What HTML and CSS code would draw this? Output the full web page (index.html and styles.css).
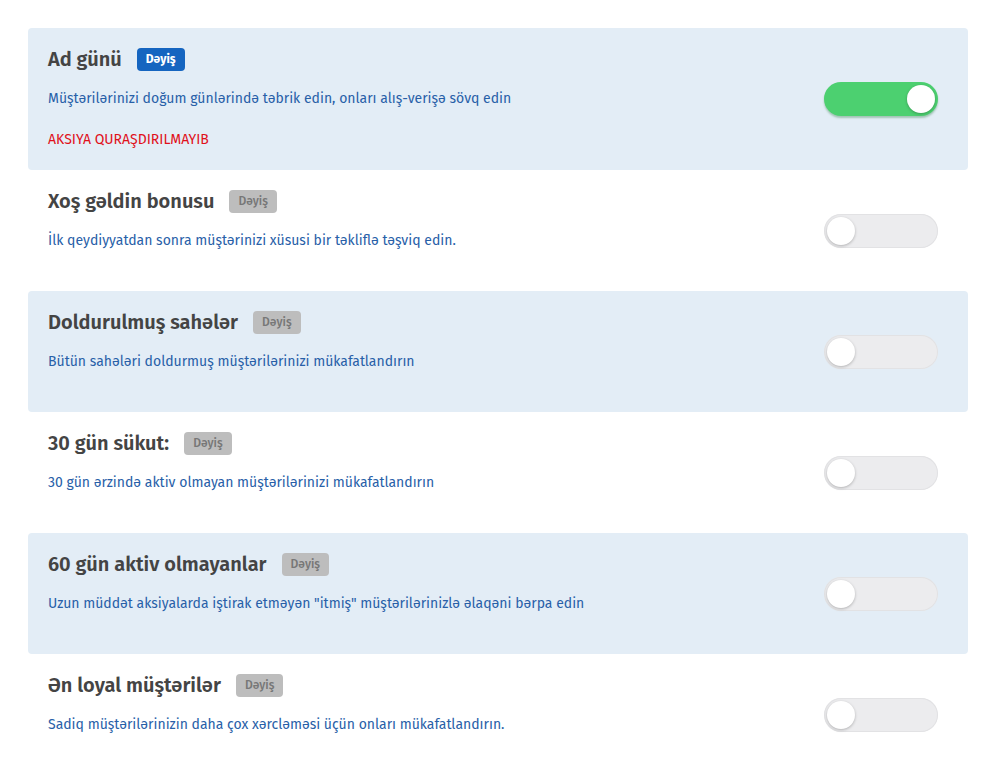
FILE: index.html
```html
<!DOCTYPE html>
<html lang="az">
<head>
<meta charset="utf-8">
<title>Aksiyalar</title>
<link rel="stylesheet" href="styles.css">
</head>
<body>
<div class="list">
  <div class="card tinted">
    <div class="info">
      <div class="head"><span class="title">Ad günü</span><span class="badge active">Dəyiş</span></div>
      <div class="desc">Müştərilərinizi doğum günlərində təbrik edin, onları alış-verişə sövq edin</div>
      <div class="warn">AKSIYA QURAŞDIRILMAYIB</div>
    </div>
    <div class="toggle on"><span class="knob"></span></div>
  </div>
  <div class="card">
    <div class="info">
      <div class="head"><span class="title">Xoş gəldin bonusu</span><span class="badge">Dəyiş</span></div>
      <div class="desc">İlk qeydiyyatdan sonra müştərinizi xüsusi bir təkliflə təşviq edin.</div>
    </div>
    <div class="toggle"><span class="knob"></span></div>
  </div>
  <div class="card tinted">
    <div class="info">
      <div class="head"><span class="title">Doldurulmuş sahələr</span><span class="badge">Dəyiş</span></div>
      <div class="desc">Bütün sahələri doldurmuş müştərilərinizi mükafatlandırın</div>
    </div>
    <div class="toggle"><span class="knob"></span></div>
  </div>
  <div class="card">
    <div class="info">
      <div class="head"><span class="title">30 gün sükut:</span><span class="badge">Dəyiş</span></div>
      <div class="desc">30 gün ərzində aktiv olmayan müştərilərinizi mükafatlandırın</div>
    </div>
    <div class="toggle"><span class="knob"></span></div>
  </div>
  <div class="card tinted">
    <div class="info">
      <div class="head"><span class="title">60 gün aktiv olmayanlar</span><span class="badge">Dəyiş</span></div>
      <div class="desc">Uzun müddət aksiyalarda iştirak etməyən "itmiş" müştərilərinizlə əlaqəni bərpa edin</div>
    </div>
    <div class="toggle"><span class="knob"></span></div>
  </div>
  <div class="card">
    <div class="info">
      <div class="head"><span class="title">Ən loyal müştərilər</span><span class="badge">Dəyiş</span></div>
      <div class="desc">Sadiq müştərilərinizin daha çox xərcləməsi üçün onları mükafatlandırın.</div>
    </div>
    <div class="toggle"><span class="knob"></span></div>
  </div>
</div>
</body>
</html>
```
FILE: styles.css
```css
* { box-sizing: border-box; }
body {
  margin: 0;
  background: #fff;
  font-family: "Fira Sans", "Noto Sans", sans-serif;
}
.list {
  padding: 28px 28px 0;
  display: flex;
  flex-direction: column;
}
.card {
  display: flex;
  align-items: center;
  justify-content: space-between;
  padding: 19px 30px 20px 20px;
  border-radius: 4px;
}
.card.tinted { background: #e3edf6; }
.head {
  display: flex;
  align-items: center;
  height: 24px;
}
.title {
  font-size: 20px;
  font-weight: 600;
  color: #444;
  line-height: 24px;
}
.badge {
  margin-left: 15px;
  height: 23px;
  padding: 0 9px;
  border-radius: 4px;
  font-size: 12px;
  font-weight: 500;
  line-height: 23px;
  background: #bdbdbd;
  color: #777;
}
.badge.active {
  background: #1565c0;
  color: #fff;
  font-weight: 700;
}
.desc {
  margin-top: 18px;
  margin-bottom: 20px;
  font-size: 14px;
  line-height: 20px;
  color: #2860a8;
}
.warn {
  font-size: 14px;
  line-height: 21px;
  color: #e0101a;
}
.toggle {
  width: 114px;
  height: 34px;
  margin-top: 2px;
  border-radius: 17px;
  background: #ececee;
  box-shadow: inset 0 0 0 1px #e2e2e4;
  display: flex;
  align-items: center;
  padding: 0 3px;
  flex-shrink: 0;
}
.toggle .knob {
  width: 28px;
  height: 28px;
  border-radius: 50%;
  background: #fff;
  box-shadow: 0 1px 3px rgba(0,0,0,0.25);
}
.toggle.on {
  margin-top: 0;
  background: #4cd070;
  box-shadow: 0 2px 2px rgba(40,120,60,0.35);
  justify-content: flex-end;
}
```
